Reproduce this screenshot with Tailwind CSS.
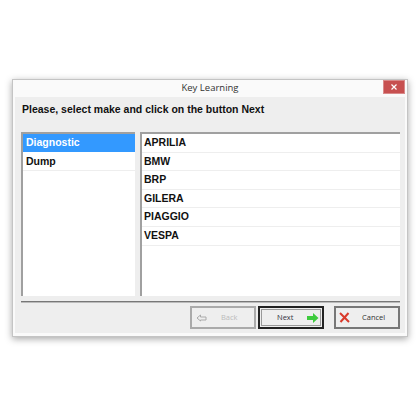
<!DOCTYPE html>
<html><head><meta charset="utf-8"><script src="https://cdn.jsdelivr.net/npm/@tailwindcss/browser@4"></script></head>
<body class="w-[420px] h-[420px] bg-white overflow-hidden font-['Liberation_Sans',sans-serif]">
<div class="pt-[79px] pl-[12px]">
<div class="relative w-[396px] h-[258px] bg-[#fafafa] border border-[#c4c4c4] shadow-[0_2px_7px_rgba(0,0,0,0.35)] px-[2px] pb-[3px] flex flex-col">
  <div class="h-[17px] shrink-0 flex items-center justify-center text-[9.5px] text-[#333] font-['Open_Sans',sans-serif]">Key Learning</div>
  <button class="absolute top-0 right-[2px] w-[22px] h-[14px] bg-[#c75050] border border-[#d98a8a] flex items-center justify-center">
    <svg width="8" height="8" viewBox="0 0 8 8"><path d="M1.5 1.5 6.5 6.5M6.5 1.5 1.5 6.5" stroke="#fff" stroke-width="1.2"/></svg>
  </button>
  <div class="flex-1 bg-[#eeeeee] pl-[6px] pr-[5px] flex flex-col min-h-0">
    <div class="h-[25px] pt-[5px] pl-px text-[10.5px] leading-[14px] font-bold text-[#111]">Please, select make and click on the button Next</div>
    <div class="flex gap-[5px] mt-[10px] h-[164px]">
      <div class="w-[114px] bg-white border-l-2 border-t-2 border-[#a0a0a0] text-[10.5px] font-bold text-[#111]">
        <div class="h-[18px] bg-[#3399ff] text-white pl-[3px] leading-[16px]">Diagnostic</div>
        <div class="h-[19px] pl-[3px] leading-[19px] border-b border-[#eee]">Dump</div>
      </div>
      <div class="flex-1 bg-white border-l-2 border-t-2 border-[#a0a0a0] text-[10.5px] font-bold text-[#111]">
        <div class="h-[18.6px] pl-[2px] leading-[16px] border-b border-[#eee]">APRILIA</div>
        <div class="h-[18.6px] pl-[2px] leading-[17px] border-b border-[#eee]">BMW</div>
        <div class="h-[18.6px] pl-[2px] leading-[16px] border-b border-[#eee]">BRP</div>
        <div class="h-[18.6px] pl-[2px] leading-[16px] border-b border-[#eee]">GILERA</div>
        <div class="h-[18.6px] pl-[2px] leading-[17px] border-b border-[#eee]">PIAGGIO</div>
        <div class="h-[18.6px] pl-[2px] leading-[16px] border-b border-[#eee]">VESPA</div>
      </div>
    </div>
    <div class="mt-[5px] h-[2px] bg-[#777] border-b border-[#bbb]"></div>
    <div class="flex justify-end mt-[3px] h-[23px] items-stretch text-[7.5px] font-['Open_Sans',sans-serif]">
      <div class="w-[66px] border-2 border-[#aaa] flex items-center text-[#bbb] pl-[4px]">
        <svg width="12" height="10" viewBox="0 0 12 10"><path d="M1 5 4.5 2V4H10V7H4.5V8Z" fill="none" stroke="#aaa" stroke-width="1"/></svg>
        <span class="ml-[13px]">Back</span>
      </div>
      <div class="ml-[2px] w-[66px] border-2 border-[#222] p-px">
        <div class="h-full border border-[#999] flex items-center text-[#334] pl-[15px] pr-[1px] justify-between">
          <span>Next</span>
          <svg width="12" height="10" viewBox="0 0 12 10"><path d="M0 3H6V0L11.5 5 6 10V7H0Z" fill="#3ecb3e"/></svg>
        </div>
      </div>
      <div class="ml-[10px] w-[66px] border-2 border-[#777] flex items-center text-[#333] pl-[3px]">
        <svg width="11" height="11" viewBox="0 0 11 11"><path d="M1 1 10 10M9.5 1 1.5 10" stroke="#d93a2b" stroke-width="2"/></svg>
        <span class="ml-[12px]">Cancel</span>
      </div>
    </div>
  </div>
</div>
</div>
</body></html>
